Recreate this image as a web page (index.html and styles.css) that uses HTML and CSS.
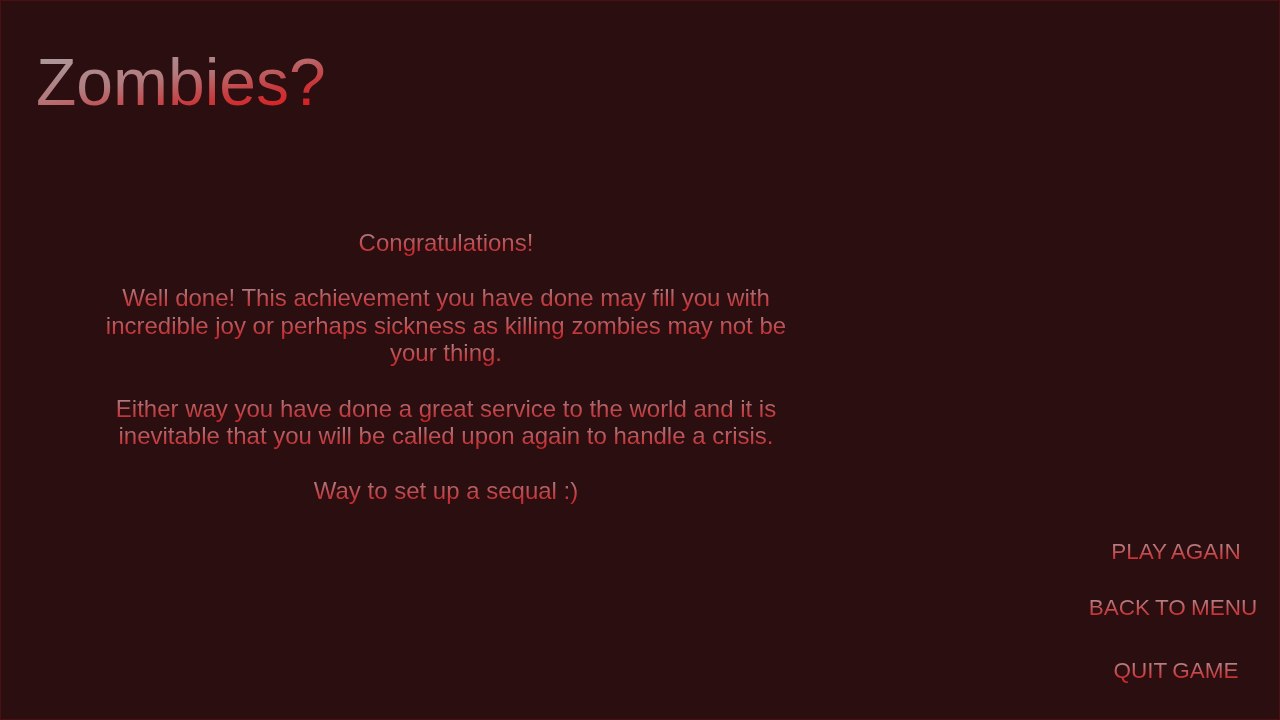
FILE: index.html
```html
<!DOCTYPE html>
<html lang="en">
<head>
	<meta charset="UTF-8">
	<title>Zombies? - Victory</title>
	<link rel="stylesheet" href="styles.css">
</head>
<body>
	<div class="screen">
		<h1 class="title">Zombies?</h1>
		<div class="stage">
			<div class="story">
				<p>Congratulations!</p>
				<p>Well done! This achievement you have done may fill you with incredible joy or perhaps sickness as killing zombies may not be your thing.</p>
				<p>Either way you have done a great service to the world and it is inevitable that you will be called upon again to handle a crisis.</p>
				<p>Way to set up a sequal :)</p>
			</div>
			<ul class="menu">
				<li class="play">PLAY AGAIN</li>
				<li class="back">BACK TO MENU</li>
				<li class="quit">QUIT GAME</li>
			</ul>
		</div>
	</div>
</body>
</html>
```

FILE: styles.css
```css
*{
	padding:0;
	margin:0;
	box-sizing:border-box;
}
html,body{
	height:100%;
}
body{
	background-color:#2b0e10;
	font-family:"Liberation Sans", Arial, sans-serif;
}
.screen{
	height:100%;
	border:1px solid #4a1013;
	display:flex;
	flex-direction:column;
	padding:48px 0 0 35px;
}
/* gradient lettering, grey on top fading into blood red */
.title,
.story p,
.menu li{
	color:transparent;
	-webkit-background-clip:text;
	background-clip:text;
}
.title{
	font-size:66px;
	font-weight:normal;
	line-height:1;
	align-self:flex-start;
	background-image:linear-gradient(170deg, #ac9698 12%, #b27b7e 42%, #c9383b 70%, #dc1a1c 92%);
}
.stage{
	flex:1;
	display:flex;
	justify-content:space-between;
}
.story{
	width:720px;
	margin:114px 0 0 50px;
	text-align:center;
	font-size:24px;
	line-height:27.6px;
}
.story p{
	margin-bottom:27.6px;
	background-image:linear-gradient(to bottom, #a98589 10%, #c24448 60%, #c6272b 95%);
	background-size:100% 27.6px;
}
.menu{
	list-style:none;
	width:200px;
	margin:425px 3px 0 0;
	text-align:center;
	font-size:22.5px;
	line-height:24px;
	word-spacing:-1px;
}
.menu li{
	display:block;
	width:max-content;
	margin:0 auto;
	background-image:linear-gradient(to bottom, #b58a8d 10%, #c8393c 70%, #cf2326 100%);
}
.menu .back{
	margin-top:32px;
	transform:translateX(-3px);
}
.menu .quit{
	margin-top:39px;
}
```
